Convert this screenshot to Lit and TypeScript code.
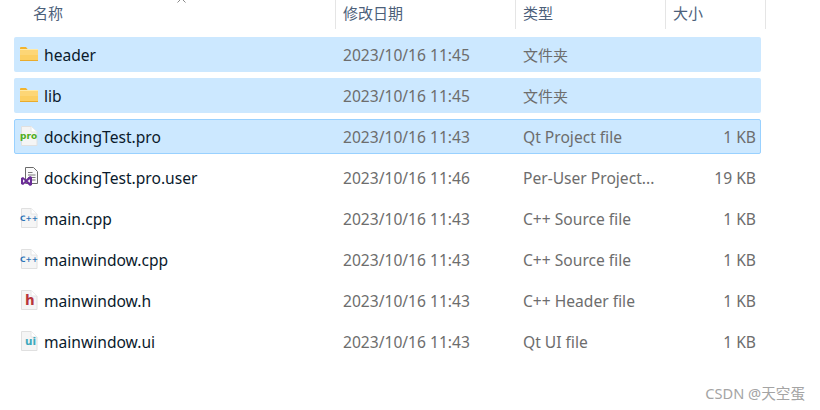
import { LitElement, html, css, svg } from "lit";
import { customElement } from "lit/decorators.js";

type Kind = "folder" | "pro" | "vs" | "cpp" | "h" | "ui";
interface Row { name: string; date: string; type: string; size: string; kind: Kind; sel?: "sel" | "focus"; }

const rows: Row[] = [
  { name: "header", date: "2023/10/16 11:45", type: "文件夹", size: "", kind: "folder", sel: "sel" },
  { name: "lib", date: "2023/10/16 11:45", type: "文件夹", size: "", kind: "folder", sel: "sel" },
  { name: "dockingTest.pro", date: "2023/10/16 11:43", type: "Qt Project file", size: "1 KB", kind: "pro", sel: "focus" },
  { name: "dockingTest.pro.user", date: "2023/10/16 11:46", type: "Per-User Project...", size: "19 KB", kind: "vs" },
  { name: "main.cpp", date: "2023/10/16 11:43", type: "C++ Source file", size: "1 KB", kind: "cpp" },
  { name: "mainwindow.cpp", date: "2023/10/16 11:43", type: "C++ Source file", size: "1 KB", kind: "cpp" },
  { name: "mainwindow.h", date: "2023/10/16 11:43", type: "C++ Header file", size: "1 KB", kind: "h" },
  { name: "mainwindow.ui", date: "2023/10/16 11:43", type: "Qt UI file", size: "1 KB", kind: "ui" },
];

const page = svg`<path d="M2.5 .5H12L18 6V19.5H2.5Z" fill="#f5f5f5" stroke="#e0e0e0"/><path d="M12 .5V6H18" fill="#fff" stroke="#e6e6e6"/>`;

function icon(kind: Kind) {
  let inner;
  switch (kind) {
    case "folder":
      inner = svg`<path d="M1 4a1 1 0 0 1 1-1H7L9 5.5H1Z" fill="#f2b32c"/><rect x="1" y="5" width="18" height="12" fill="#fdd676"/><rect x="1" y="5" width="18" height="1" fill="#ffeaa8"/><rect x="1" y="11" width="18" height="5" fill="#fccf62"/><rect x="1" y="16" width="18" height="1" fill="#e9ab2c"/>`;
      break;
    case "pro":
      inner = svg`${page}<text x="1" y="13" class="ic" fill="#4fae1d" font-size="9">pro</text>`;
      break;
    case "vs":
      inner = svg`<path d="M6.5 .5H14.5L18.5 4.5V16.5H6.5Z" fill="#fafafa" stroke="#6b6b6b"/><path d="M9 5.5H13.5M9 8H16.5M9 10.5H16.5M9 13H16.5" stroke="#7a7a7a"/><path d="M2 11L4 10L7 12.5L11 9L13 10V18L11 19L7 15.5L4 18L2 17Z" fill="#6a2c96"/><path d="M4 12.3V15.7L6 14ZM8.5 14L11 15.8V12.2Z" fill="#f5f0f8"/>`;
      break;
    case "cpp":
      inner = svg`${page}<text x="1" y="13" class="ic" fill="#2c74b8" font-size="7.5">C++</text>`;
      break;
    case "h":
      inner = svg`${page}<text x="6" y="15" class="ic" fill="#b8343a" font-size="13.5">h</text>`;
      break;
    case "ui":
      inner = svg`${page}<text x="6" y="14" class="ic" fill="#3fa9bd" font-size="10.5">ui</text>`;
      break;
  }
  return html`<svg class="icon" width="20" height="20" viewBox="0 0 20 20" aria-hidden="true">${inner}</svg>`;
}

@customElement("app-root")
export class AppRoot extends LitElement {
  static styles = css`
    :host {
      display: block;
      position: relative;
      width: 820px;
      height: 410px;
      background: #fff;
      overflow: hidden;
      font-family: "Noto Sans", "Noto Sans CJK SC", sans-serif;
      font-size: 15.6px;
    }
    .head {
      display: grid;
      grid-template-columns: 335px 180px 150px 101px;
      width: 766px;
      height: 29px;
      margin-bottom: 8px;
      color: #4c607a;
      font-family: "Noto Sans CJK SC", sans-serif;
      font-size: 15px;
      line-height: 25px;
    }
    .head div { padding-left: 7px; box-sizing: border-box; }
    .head div:first-child { padding-left: 33px; }
    .head div:not(:first-child) { border-left: 1px solid #e5e5e5; }
    .head div:last-child { border-right: 1px solid #e5e5e5; }
    .list { display: flex; flex-direction: column; gap: 6px; margin-left: 14px; width: 747px; }
    .row {
      display: grid;
      grid-template-columns: 5px 20px 4px 299px 180px 150px 1fr;
      height: 35px;
      box-sizing: border-box;
      align-items: center;
      border-radius: 2px;
      border: 1px solid transparent;
      line-height: 31px;
      white-space: nowrap;
    }
    .row span { padding-top: 2px; }
    .row.sel { background: #cce8ff; }
    .row.sel .type { font-size: 15px; }
    .row.focus { background: #cce8ff; border-color: #99d1ff; }
    .icon { grid-column: 2; display: block; margin-left: -1px; margin-top: -1px; }
    .ic { font-family: "DejaVu Sans", sans-serif; font-weight: 700; }
    .name { grid-column: 4; color: #0a1a2c; }
    .date, .type { color: #6d6d6d; }
    .size { color: #6d6d6d; text-align: right; padding-right: 4px; }
    .chev { position: absolute; left: 177px; top: -3px; }
    .mark {
      position: absolute;
      right: 15px;
      bottom: 7px;
      color: #a4a4a4;
      font-size: 14.6px;
      line-height: 20px;
    }
  `;

  render() {
    return html`
      <svg class="chev" width="9" height="7" viewBox="0 0 9 7" aria-hidden="true"><path d="M.5 5.5L4.5 1.5L8.5 5.5" fill="none" stroke="#8a8a8a"/></svg>
      <div class="head"><div>名称</div><div>修改日期</div><div>类型</div><div>大小</div></div>
      <div class="list">
        ${rows.map(
          (r) => html`<div class="row ${r.sel ?? ""}">
            ${icon(r.kind)}
            <span class="name">${r.name}</span>
            <span class="date">${r.date}</span>
            <span class="type">${r.type}</span>
            <span class="size">${r.size}</span>
          </div>`
        )}
      </div>
      <div class="mark">CSDN @天空蛋</div>
    `;
  }
}
